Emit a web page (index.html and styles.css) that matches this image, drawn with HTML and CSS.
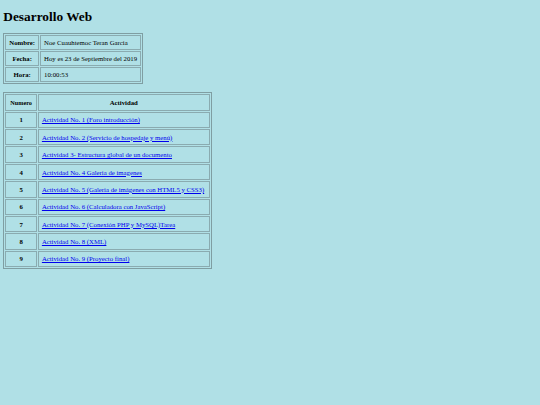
FILE: index.html
```html
<!DOCTYPE html>
<html lang="es">
<head>
<meta charset="utf-8">
<title>Desarrollo Web</title>
<link rel="stylesheet" href="styles.css">
</head>
<body>
<h1 class="title">Desarrollo Web</h1>
<table class="grid info">
  <tr><th>Nombre:</th><td>Noe Cuauhtemoc Teran Garcia</td></tr>
  <tr><th>Fecha:</th><td>Hoy es 23 de Septiembre del 2019</td></tr>
  <tr><th>Hora:</th><td>10:00:53</td></tr>
</table>
<table class="grid acts">
  <tr><th class="num-head">Numero</th><th class="act-head">Actividad</th></tr>
  <tr><th>1</th><td><a href="#">Actividad No. 1 (Foro introducción)</a></td></tr>
  <tr><th>2</th><td><a href="#">Actividad No. 2 (Servicio de hospedaje y menú)</a></td></tr>
  <tr><th>3</th><td><a href="#">Actividad 3- Estructura global de un documento</a></td></tr>
  <tr><th>4</th><td><a href="#">Actividad No. 4 Galeria de imagenes</a></td></tr>
  <tr><th>5</th><td><a href="#">Actividad No. 5 (Galeria de imágenes con HTML5 y CSS3)</a></td></tr>
  <tr><th>6</th><td><a href="#">Actividad No. 6 (Calculadora con JavaScript)</a></td></tr>
  <tr><th>7</th><td><a href="#">Actividad No. 7 (Conexión PHP y MySQL)Tarea</a></td></tr>
  <tr><th>8</th><td><a href="#">Actividad No. 8 (XML)</a></td></tr>
  <tr><th>9</th><td><a href="#">Actividad No. 9 (Proyecto final)</a></td></tr>
</table>
</body>
</html>
```
FILE: styles.css
```css
html {
  background: #b0e0e6;
}
body {
  margin: 3.33px;
  font-family: "Liberation Serif", "Times New Roman", serif;
  font-size: 6.75px;
  line-height: 7px;
  color: #000;
}
.title {
  font-size: 13.33px;
  line-height: 15px;
  font-weight: bold;
  margin: 6px 0 9px;
}
.grid {
  border: 1px solid #7f9ea2;
  border-spacing: 1px;
}
.info {
  margin-bottom: 8px;
}
.grid th,
.grid td {
  border: 1px solid #8aabb0;
  padding: 3px 3px;
  text-align: left;
}
.grid th {
  text-align: center;
  font-weight: bold;
}
.acts th,
.acts td {
  padding: 3.7px 3px;
}
.acts td {
  padding-right: 4.5px;
}
.acts .num-head {
  padding-left: 4px;
  padding-right: 4px;
}
.grid a {
  color: #0000ee;
}
.num-head {
  font-size: 6.2px;
}
```
